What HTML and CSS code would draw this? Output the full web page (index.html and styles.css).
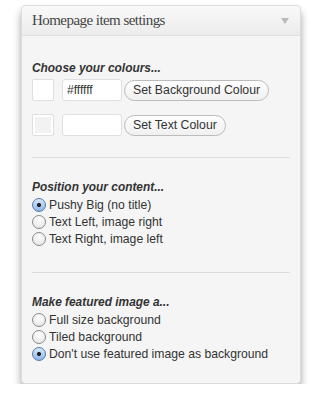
FILE: index.html
```html
<!DOCTYPE html>
<html lang="en">
<head>
    <meta charset="UTF-8">
    <title>Homepage item settings</title>
    <link rel="stylesheet" href="styles.css">
</head>
<body>
    <div class="widget">
        <div class="widget-top">
            <h3>Homepage item settings</h3>
            <span class="toggle"></span>
        </div>
        <div class="widget-inside">
            <!-- colours -->
            <div class="section">
                <h4>Choose your colours...</h4>
                <div class="colour-row">
                    <span class="swatch"></span>
                    <input type="text" class="hex" value="#ffffff">
                    <button class="pill">Set Background Colour</button>
                </div>
                <div class="colour-row">
                    <span class="swatch swatch-grey"></span>
                    <input type="text" class="hex" value="">
                    <button class="pill">Set Text Colour</button>
                </div>
            </div>
            <hr>
            <!-- position -->
            <div class="section">
                <h4>Position your content...</h4>
                <label class="option"><input type="radio" name="pos" checked>Pushy Big (no title)</label>
                <label class="option"><input type="radio" name="pos">Text Left, image right</label>
                <label class="option"><input type="radio" name="pos">Text Right, image left</label>
            </div>
            <hr class="wide">
            <!-- featured image -->
            <div class="section">
                <h4>Make featured image a...</h4>
                <label class="option"><input type="radio" name="img">Full size background</label>
                <label class="option"><input type="radio" name="img">Tiled background</label>
                <label class="option"><input type="radio" name="img" checked>Don't use featured image as background</label>
            </div>
        </div>
    </div>
</body>
</html>
```

FILE: styles.css
```css
body {
    margin: 0;
    padding: 5px 18px 0 21px;
    background: #fff;
    font-family: "Liberation Sans", Arial, sans-serif;
    font-size: 12.2px;
    color: #333;
}
.widget {
    width: 278px;
    border: 1px solid #dcdcdc;
    border-radius: 4px;
    background: #f5f5f5;
    box-shadow: 0 6px 9px -1px rgba(0, 0, 0, 0.45);
}
.widget-top {
    height: 29px;
    display: flex;
    align-items: center;
    justify-content: space-between;
    padding: 0 11px 0 10px;
    background: linear-gradient(#f9f9f9, #ececec);
    border-bottom: 1px solid #dfdfdf;
    border-radius: 4px 4px 0 0;
}
.widget-top h3 {
    margin: 0;
    font-family: "Liberation Serif", Georgia, serif;
    font-weight: normal;
    font-size: 15px;
    letter-spacing: -0.55px;
    color: #464646;
}
.toggle {
    width: 0;
    height: 0;
    border-left: 4px solid transparent;
    border-right: 4px solid transparent;
    border-top: 6px solid #bbb;
}
.widget-inside {
    padding: 25px 10px 21px 10px;
}
.section {
    display: flex;
    flex-direction: column;
}
h4 {
    margin: 0;
    line-height: 14px;
    font-size: 11.9px;
    font-weight: bold;
    font-style: italic;
    color: #333;
}
h4 + .option {
    margin-top: 2.5px;
}
.colour-row {
    display: flex;
    align-items: center;
    gap: 2px;
    margin-top: 4px;
}
.colour-row + .colour-row {
    margin-top: 13px;
}
.swatch {
    width: 20px;
    height: 20px;
    border: 1px solid #dfdfdf;
    border-radius: 2px;
    background: #fff;
    margin-right: 6px;
}
.swatch-grey {
    background: #f2f2f2;
    box-shadow: inset 0 0 0 2px #fff;
}
.hex {
    width: 50px;
    height: 20px;
    margin: 0;
    padding: 0 4px;
    border: 1px solid #dfdfdf;
    border-radius: 3px;
    background: #fff;
    font-family: inherit;
    font-size: 12px;
    color: #333;
}
.pill {
    height: 21px;
    padding: 0 8px;
    border: 1px solid #bbb;
    border-radius: 11px;
    background: linear-gradient(#fefefe, #f0f0f0);
    font-family: inherit;
    font-size: 12.3px;
    color: #333;
}
hr {
    border: none;
    border-top: 1px solid #dcdcdc;
    margin: 21px 0 21.5px;
}
hr.wide {
    margin-top: 25px;
}
.option {
    display: flex;
    align-items: center;
    gap: 3px;
    height: 17px;
}
.option input {
    appearance: none;
    width: 14px;
    height: 14px;
    margin: 0;
    border: 1px solid #8a8a8a;
    border-radius: 50%;
    background: radial-gradient(circle at 50% 30%, #fff, #e2e2e2);
}
.option input:checked {
    border-color: #5677a6;
    background: radial-gradient(circle, #222 0 1.8px, transparent 2.3px),
                linear-gradient(#d6e8fb, #8cb6ea);
}
```
